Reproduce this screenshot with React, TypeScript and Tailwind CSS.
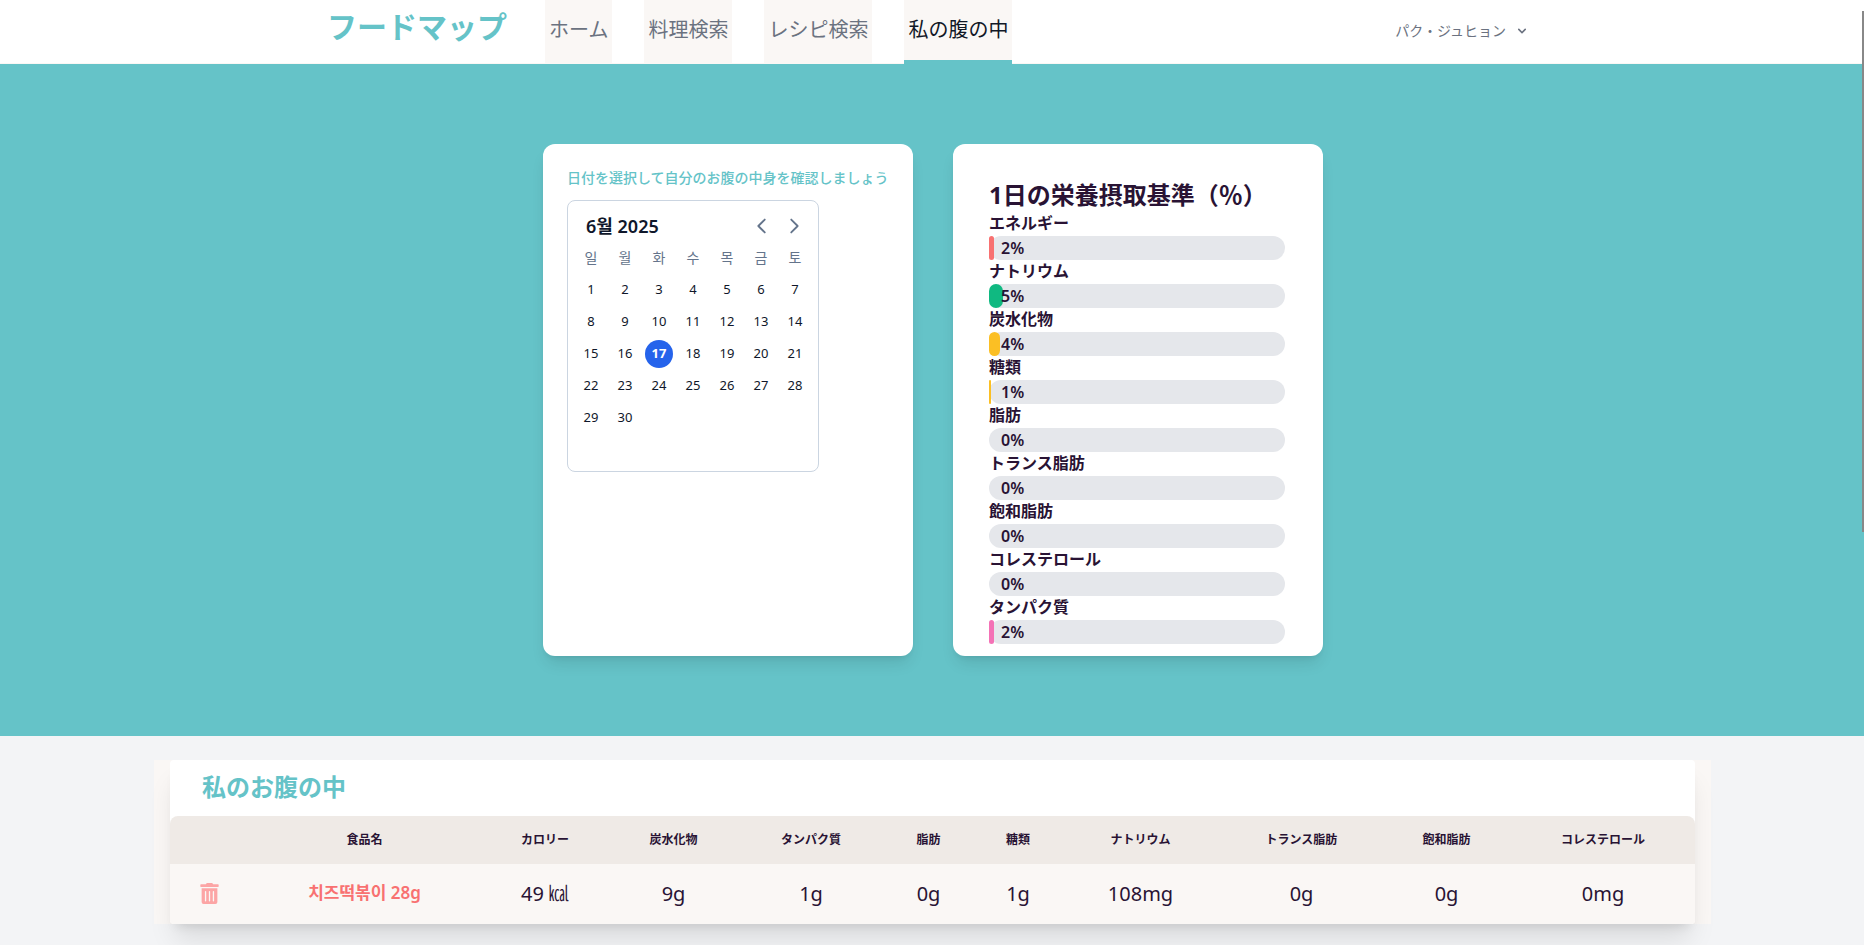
import { FaTrashAlt } from 'react-icons/fa'
import { HiChevronDown, HiOutlineChevronLeft, HiOutlineChevronRight } from 'react-icons/hi'

interface Nutrient {
  name: string
  percent: number
  ratio: number
  color: string
}

const NAV_ITEMS = ['ホーム', '料理検索', 'レシピ検索', '私の腹の中']

const WEEKDAYS = ['일', '월', '화', '수', '목', '금', '토']

const SELECTED_DAY = 17

const NUTRIENTS: Nutrient[] = [
  { name: 'エネルギー', percent: 2, ratio: 1.8, color: 'bg-[#f87171]' },
  { name: 'ナトリウム', percent: 5, ratio: 4.7, color: 'bg-[#10b981]' },
  { name: '炭水化物', percent: 4, ratio: 3.7, color: 'bg-[#fbbf24]' },
  { name: '糖類', percent: 1, ratio: 0.7, color: 'bg-[#fbbf24]' },
  { name: '脂肪', percent: 0, ratio: 0, color: 'bg-[#fbbf24]' },
  { name: 'トランス脂肪', percent: 0, ratio: 0, color: 'bg-[#f87171]' },
  { name: '飽和脂肪', percent: 0, ratio: 0, color: 'bg-[#10b981]' },
  { name: 'コレステロール', percent: 0, ratio: 0, color: 'bg-[#f87171]' },
  { name: 'タンパク質', percent: 2, ratio: 1.8, color: 'bg-[#f472b6]' },
]

const COLUMNS = [
  { label: '食品名', width: 'w-[239px]' },
  { label: 'カロリー', width: 'w-[122px]' },
  { label: '炭水化物', width: 'w-[135px]' },
  { label: 'タンパク質', width: 'w-[140px]' },
  { label: '脂肪', width: 'w-[95px]' },
  { label: '糖類', width: 'w-[84px]' },
  { label: 'ナトリウム', width: 'w-[161px]' },
  { label: 'トランス脂肪', width: 'w-[161px]' },
  { label: '飽和脂肪', width: 'w-[129px]' },
  { label: 'コレステロール', width: 'w-[184px]' },
]

const FOODS = [
  {
    name: '치즈떡볶이 28g',
    values: ['49 ㎉', '9g', '1g', '0g', '1g', '108mg', '0g', '0g', '0mg'],
  },
]

export default function App() {
  return (
    <div className="min-h-screen bg-[#f3f4f6] text-[#291334] font-['Noto_Sans','Noto_Sans_CJK_JP',sans-serif]">
      <Header />
      <main>
        <section className="flex flex-wrap items-stretch justify-center gap-10 bg-[#65c3c8] py-20 pl-0.5">
          <CalendarCard />
          <NutrientCard />
        </section>
        <FoodTable />
      </main>
      {/* スクロール位置 */}
      <div className="fixed top-[11px] right-0 h-[521px] w-0.5 bg-[#888888]" />
    </div>
  )
}

function Header() {
  return (
    <header className="h-16 border-b border-[#faf7f5] bg-white">
      <div className="mx-auto flex h-16 max-w-7xl justify-between pr-[42px] pl-[35px]">
        <div className="flex">
          <h1 className="pt-1 text-3xl leading-[46px] font-bold text-[#65c3c8]">フードマップ</h1>
          <nav className="ml-[38px] flex gap-8">
            {NAV_ITEMS.map((item, i) => {
              const active = i === NAV_ITEMS.length - 1
              return (
                <a
                  key={item}
                  href="#"
                  aria-current={active ? 'page' : undefined}
                  className={
                    active
                      ? 'h-16 border-b-4 border-[#65c3c8] bg-[#faf7f5] px-1 text-xl leading-[60px] text-[#111827]'
                      : 'h-[63px] bg-[#faf7f5] px-1 text-xl leading-[60px] text-[#6b7280]'
                  }
                >
                  {item}
                </a>
              )
            })}
          </nav>
        </div>
        <button type="button" className="flex items-center gap-2 pb-0.5 text-sm text-[#6b7280]">
          パク・ジュヒョン
          <HiChevronDown className="h-4 w-4" />
        </button>
      </div>
    </header>
  )
}

function CalendarCard() {
  const days = Array.from({ length: 30 }, (_, i) => i + 1)

  return (
    <div className="w-[370px] rounded-xl bg-white px-6 pt-6 shadow-lg">
      <p className="mb-3 text-sm font-medium text-[#65c3c8]">
        日付を選択して自分のお腹の中身を確認しましょう
      </p>
      <div className="h-[272px] w-[252px] rounded-lg border border-[#cbd5e1] px-1.5 py-[5px] text-[#0f172a] font-['Noto_Sans','Noto_Sans_CJK_KR',sans-serif]">
        <div className="flex h-9 items-center justify-between pt-1 pr-0.5 pl-3">
          <span className="text-lg leading-6 font-semibold">6월 2025</span>
          <div className="flex text-[#64748b]">
            <button type="button" aria-label="이전 달" className="flex h-8 w-8 items-center justify-center">
              <HiOutlineChevronLeft className="h-[22px] w-[22px]" />
            </button>
            <button type="button" aria-label="다음 달" className="flex h-8 w-8 items-center justify-center">
              <HiOutlineChevronRight className="h-[22px] w-[22px]" />
            </button>
          </div>
        </div>
        <div className="grid grid-cols-7 text-center">
          {WEEKDAYS.map(w => (
            <span key={w} className="text-sm leading-8 text-[#64748b]">
              {w}
            </span>
          ))}
          {days.map(d => (
            <button key={d} type="button" className="flex h-8 items-center justify-center text-[13px]">
              {d === SELECTED_DAY ? (
                <span className="flex h-7 w-7 items-center justify-center rounded-full bg-[#2563eb] font-bold text-white">
                  {d}
                </span>
              ) : (
                d
              )}
            </button>
          ))}
        </div>
      </div>
    </div>
  )
}

function NutrientCard() {
  return (
    <div className="w-[370px] rounded-xl bg-white pt-9 pr-[38px] pb-3 pl-9 shadow-lg">
      <h2 className="pb-0.5 text-2xl leading-[30px] font-bold">1日の栄養摂取基準（％）</h2>
      {NUTRIENTS.map(n => (
        <div key={n.name}>
          <p className="pb-0.5 text-base leading-[22px] font-semibold">{n.name}</p>
          <div className="relative h-6 rounded-full bg-[#e5e7eb]">
            <div className={`h-6 rounded-full ${n.color}`} style={{ width: `${n.ratio}%` }} />
            <span className="absolute inset-y-0 left-3 text-base leading-6 font-semibold">{n.percent}%</span>
          </div>
        </div>
      ))}
    </div>
  )
}

function FoodTable() {
  return (
    <section className="pt-6 pr-[153px] pb-6 pl-[154px]">
      <div className="bg-[#faf7f5] px-4">
        <div className="rounded bg-white shadow-xl">
          <h2 className="h-14 pl-8 text-2xl leading-[54px] font-bold text-[#65c3c8]">私のお腹の中</h2>
          <table className="w-full table-fixed text-center">
            <colgroup>
              <col className="w-[75px]" />
              {COLUMNS.map(c => (
                <col key={c.label} className={c.width} />
              ))}
            </colgroup>
            <thead>
              <tr className="h-12 text-xs">
                <th className="rounded-tl-lg bg-[#efeae6]" />
                {COLUMNS.map(c => (
                  <th key={c.label} scope="col" className="bg-[#efeae6] font-bold last:rounded-tr-lg">
                    {c.label}
                  </th>
                ))}
              </tr>
            </thead>
            <tbody>
              {FOODS.map(food => (
                <tr key={food.name} className="h-[60px] text-xl">
                  <td className="rounded-bl bg-[#faf7f5] pb-0.5 pl-1">
                    <button type="button" aria-label="削除" className="mx-auto block text-[#fca5a5]">
                      <FaTrashAlt className="h-[21px] w-[21px]" />
                    </button>
                  </td>
                  <td className="bg-[#faf7f5] pb-0.5 text-[17px] font-semibold text-[#f87171] font-['Noto_Sans','Noto_Sans_CJK_KR',sans-serif]">
                    {food.name}
                  </td>
                  {food.values.map((value, i) => (
                    <td key={COLUMNS[i + 1].label} className="bg-[#faf7f5] last:rounded-br">
                      {value}
                    </td>
                  ))}
                </tr>
              ))}
            </tbody>
          </table>
        </div>
      </div>
    </section>
  )
}
